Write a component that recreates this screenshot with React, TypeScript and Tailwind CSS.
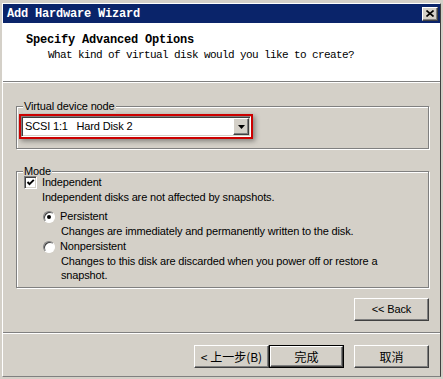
import React from 'react';

const sans = "font-['Liberation_Sans',Arial,sans-serif] text-[11px] tracking-[-0.15px] text-black";
const cjk = "font-['Noto_Sans_CJK_SC','Liberation_Sans',sans-serif] text-[12px] text-black";
const mono = "font-['Liberation_Mono','Courier_New',monospace]";

const raised =
  'border border-t-white border-l-white border-r-[#404040] border-b-[#404040] shadow-[inset_-1px_-1px_0_#808080] bg-[#d4d0c8]';
const sunken =
  'border border-t-[#808080] border-l-[#808080] border-r-white border-b-white shadow-[inset_1px_1px_0_#404040,inset_-1px_-1px_0_#d4d0c8]';

const GroupBox: React.FC<{ label: string; className: string; children: React.ReactNode }> = ({ label, className, children }) => (
  <div className={`relative border border-[#808080] shadow-[inset_1px_1px_0_#fff,1px_1px_0_#fff] ${className}`}>
    <span className={`absolute left-[6px] -top-[8px] bg-[#d4d0c8] px-[1px] leading-[14px] ${sans}`}>{label}</span>
    {children}
  </div>
);

const Radio: React.FC<{ checked?: boolean }> = ({ checked }) => (
  <span className="w-[12px] h-[12px] rounded-full bg-white border border-t-[#808080] border-l-[#808080] border-r-white border-b-white shadow-[inset_1px_1px_0_#404040] flex items-center justify-center shrink-0">
    {checked && <span className="w-[4px] h-[4px] rounded-full bg-black" />}
  </span>
);

const Button: React.FC<{ children: React.ReactNode; isDefault?: boolean; font?: string }> = ({ children, isDefault, font }) =>
  isDefault ? (
    <div className="w-[75px] h-[23px] border border-black">
      <div className={`w-full h-full flex items-center justify-center ${raised} ${font ?? sans}`}>{children}</div>
    </div>
  ) : (
    <div className={`w-[75px] h-[23px] flex items-center justify-center ${raised} ${font ?? sans}`}>{children}</div>
  );

export default function App() {
  return (
    <div className="w-[443px] h-[379px] bg-[#d4d0c8] pt-[3px] pl-[2px] pr-[2px] pb-[2px] overflow-hidden">
      <div className="h-full flex flex-col border border-t-white border-l-white border-r-[#404040] border-b-[#808080]">
        {/* title bar */}
        <div className="h-[19px] bg-[#0a246a] flex items-center justify-between pl-[4px] pr-[2px] shrink-0">
          <span className={`${mono} text-[12px] font-bold tracking-[-0.2px] text-white leading-none`}>Add Hardware Wizard</span>
          <div className={`w-[16px] h-[14px] flex items-center justify-center ${raised}`}>
            <svg width="8" height="7" viewBox="0 0 8 7">
              <path d="M0.5 0.5 L7.5 6.5 M7.5 0.5 L0.5 6.5" stroke="black" strokeWidth="1.6" />
            </svg>
          </div>
        </div>

        {/* header */}
        <div className="h-[58px] bg-white pt-[10px] pl-[23px] shrink-0">
          <div className={`${mono} text-[12px] font-bold tracking-[-0.2px] leading-[15px] text-black`}>Specify Advanced Options</div>
          <div className={`${mono} text-[11px] tracking-[-0.6px] leading-[15px] text-black pl-[22px]`}>
            What kind of virtual disk would you like to create?
          </div>
        </div>
        <div className="h-[2px] border-t border-t-[#808080] border-b border-b-white shrink-0" />

        {/* body */}
        <div className="flex flex-col pl-[13px] pr-[11px]">
          <GroupBox label="Virtual device node" className="mt-[23px] h-[43px]">
            <div className="ml-[2px] mt-[7px] w-[234px] h-[25px] border-2 border-[#cc0000] shadow-[2px_2px_5px_rgba(0,0,0,0.4)]">
              <div className={`h-full flex items-center bg-white ${sunken}`}>
                <span className={`pl-[3px] whitespace-pre leading-none ${sans}`}>SCSI 1:1   Hard Disk 2</span>
                <div className={`ml-auto mr-[1px] w-[16px] h-[17px] flex items-center justify-center ${raised}`}>
                  <svg width="7" height="4" viewBox="0 0 7 4">
                    <path d="M0 0 H7 L3.5 4 Z" fill="black" />
                  </svg>
                </div>
              </div>
            </div>
          </GroupBox>

          <GroupBox label="Mode" className="mt-[22px] h-[117px]">
            <div className={`pt-[3px] pl-[7px] flex flex-col leading-[15px] ${sans}`}>
              <div className="flex items-center gap-[5px] h-[15px]">
                <span className={`relative w-[13px] h-[13px] bg-white shrink-0 ${sunken}`}>
                  <svg className="absolute left-[1px] top-[1px]" width="9" height="9" viewBox="0 0 9 9">
                    <path d="M1.5 4 L3.5 6.2 L7.8 1.8" stroke="black" strokeWidth="1.9" fill="none" />
                  </svg>
                </span>
                <span>Independent</span>
              </div>
              <div className="pl-[18px]">Independent disks are not affected by snapshots.</div>
              <div className="mt-[4px] pl-[19px] flex items-center gap-[5px] h-[15px]">
                <Radio checked />
                <span>Persistent</span>
              </div>
              <div className="pl-[37px]">Changes are immediately and permanently written to the disk.</div>
              <div className="pl-[19px] flex items-center gap-[5px] h-[15px]">
                <Radio />
                <span>Nonpersistent</span>
              </div>
              <div className="pl-[37px] leading-[14px]">
                Changes to this disk are discarded when you power off or restore a<br />
                snapshot.
              </div>
            </div>
          </GroupBox>

          <div className="mt-[10px] flex justify-end">
            <Button>&lt;&lt; Back</Button>
          </div>
        </div>

        <div className="mt-[11px] h-[2px] border-t border-t-[#808080] border-b border-b-white shrink-0" />

        <div className="mt-[11px] flex justify-end pr-[11px]">
          <Button font={cjk}>&lt; 上一步(B)</Button>
          <Button font={cjk} isDefault>完成</Button>
          <div className="w-[10px]" />
          <Button font={cjk}>取消</Button>
        </div>
      </div>
    </div>
  );
}
